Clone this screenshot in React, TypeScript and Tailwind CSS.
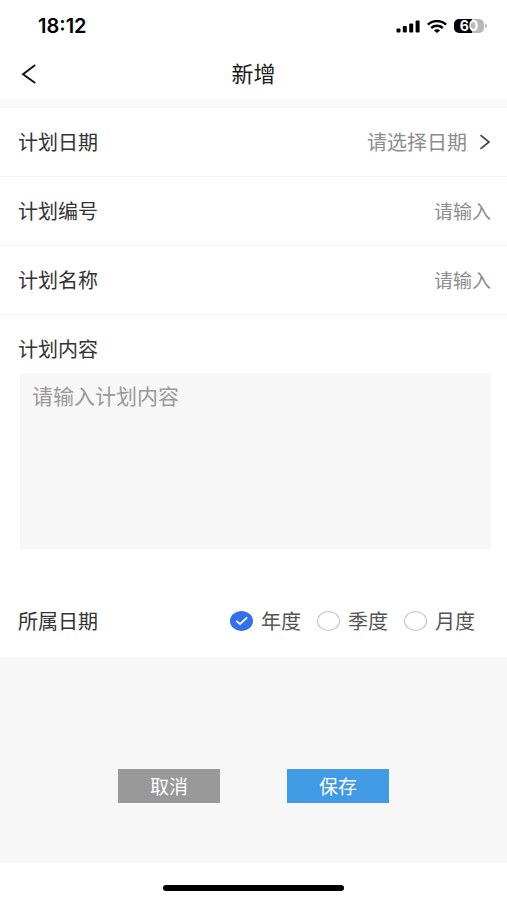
import { useState } from 'react';

interface TextRowProps {
  id: string;
  label: string;
}

const periods = [
  { value: 'year', label: '年度' },
  { value: 'quarter', label: '季度' },
  { value: 'month', label: '月度' },
];

function StatusBar() {
  return (
    <div className="flex h-12 items-center justify-between pt-1 pr-5 pl-[38px]">
      <span className="font-['Inter'] text-[20px] leading-6 font-semibold text-black">18:12</span>
      <div className="flex items-center gap-[7px]">
        <svg className="h-[13px] w-6" viewBox="0 0 24 13" fill="#000">
          <rect x="0.5" y="8.5" width="4" height="4" rx="1" />
          <rect x="6.8" y="6" width="4" height="6.5" rx="1" />
          <rect x="13.2" y="3.4" width="4" height="9.1" rx="1" />
          <rect x="19.6" y="0.5" width="4" height="12" rx="1" />
        </svg>
        <svg className="h-[13px] w-5" viewBox="0 0 20 13" fill="none" stroke="#000" strokeWidth="2.5">
          <path d="M0.9 4.6C6 -0.1 14 -0.1 19.1 4.6" />
          <path d="M4.2 8c3.3-2.9 8.3-2.9 11.6 0" />
          <path d="M10 13 6.900 10.400c1.800-1.500 4.400-1.500 6.200 0z" fill="#000" stroke="none" />
        </svg>
        <div className="flex items-center gap-px">
          <div className="flex h-[14px] w-[30px] items-center justify-center rounded-[5px] bg-linear-to-r from-black from-60% to-[#b9b9b9] to-60% font-['Inter'] text-[14px] leading-[14px] font-bold text-white">
            60
          </div>
          <div className="h-1 w-[2px] rounded-r-full bg-[#b9b9b9]" />
        </div>
      </div>
    </div>
  );
}

function TextRow({ id, label }: TextRowProps) {
  return (
    <div className="flex h-[69px] items-center border-b border-[#f4f4f4] pr-4 pl-[18px]">
      <label htmlFor={id} className="shrink-0 text-[20px] leading-7 text-[#333]">
        {label}
      </label>
      <input
        id={id}
        type="text"
        placeholder="请输入"
        className="h-7 min-w-0 flex-1 text-right text-[19px] leading-7 text-[#333] outline-none placeholder:text-[#8c8c8c]"
      />
    </div>
  );
}

export default function App() {
  const [period, setPeriod] = useState('year');

  return (
    <div className="flex min-h-screen flex-col bg-white font-['Noto_Sans_CJK_SC',sans-serif]">
      <StatusBar />

      <header className="grid h-[51px] grid-cols-[48px_1fr_48px] items-center">
        <button type="button" aria-label="返回" className="flex h-10 items-center pl-[21px]">
          <svg className="h-5 w-4" viewBox="0 0 16 20" fill="none" stroke="#111" strokeWidth="1.9">
            <path d="M14.2 1 2 10.2 14.2 19" />
          </svg>
        </button>
        <h1 className="pb-1 text-center text-[22px] leading-8 text-[#1a1a1a]">新增</h1>
      </header>

      <div className="h-[9px] bg-[#fafafa]" />

      <form className="flex flex-1 flex-col" onSubmit={(e) => e.preventDefault()}>
        <div className="flex h-[69px] items-center justify-between border-b border-[#f4f4f4] pr-4 pl-[18px]">
          <label htmlFor="plan-date" className="text-[20px] leading-7 text-[#333]">
            计划日期
          </label>
          <button id="plan-date" type="button" className="flex items-center gap-3 text-[20px] leading-7 text-[#8c8c8c]">
            请选择日期
            <svg className="h-4 w-3" viewBox="0 0 12 16" fill="none" stroke="#444" strokeWidth="1.7">
              <path d="M1.5 1.2 10 8l-8.500 6.800" />
            </svg>
          </button>
        </div>

        <TextRow id="plan-code" label="计划编号" />
        <TextRow id="plan-name" label="计划名称" />

        <div className="flex flex-col gap-[10px] pt-5 pr-4 pb-9 pl-[18px]">
          <label htmlFor="plan-content" className="text-[20px] leading-7 text-[#333]">
            计划内容
          </label>
          <textarea
            id="plan-content"
            placeholder="请输入计划内容"
            className="ml-[2px] block h-44 resize-none bg-[#f7f7f7] px-3 py-2 text-[21px] leading-7 text-[#333] outline-none placeholder:text-[#999]"
          />
        </div>

        <div
          role="radiogroup"
          aria-labelledby="period-label"
          className="flex h-[72px] items-center justify-between pr-8 pl-[18px]"
        >
          <span id="period-label" className="text-[20px] leading-7 text-[#333]">
            所属日期
          </span>
          <div className="flex gap-4">
            {periods.map((item) => (
              <label key={item.value} className="flex items-center gap-2 text-[20px] leading-7 text-[#555]">
                <span className="relative flex">
                  <input
                    type="radio"
                    name="period"
                    value={item.value}
                    checked={period === item.value}
                    onChange={() => setPeriod(item.value)}
                    className="h-5 w-[23px] appearance-none rounded-[50%] border border-[#c4c4c4] bg-white checked:border-[#3370eb] checked:bg-[#3370eb]"
                  />
                  {period === item.value && (
                    <svg
                      className="pointer-events-none absolute inset-0 h-5 w-[23px]"
                      viewBox="0 0 23 20"
                      fill="none"
                      stroke="#fff"
                      strokeWidth="1.7"
                    >
                      <path d="M6.300 9.800 10 13l7.200-6.600" />
                    </svg>
                  )}
                </span>
                {item.label}
              </label>
            ))}
          </div>
        </div>

        <div className="flex flex-1 items-start justify-center gap-[67px] bg-[#f7f7f7] pt-28 pb-[60px]">
          <button type="button" className="h-[34px] w-[102px] bg-[#999] text-[19px] leading-7 text-white">
            取消
          </button>
          <button type="submit" className="h-[34px] w-[102px] bg-[#409ae4] text-[19px] leading-7 text-white">
            保存
          </button>
        </div>
      </form>

      <div className="flex h-[37px] items-end justify-center pb-[9px]">
        <div className="h-[6px] w-[181px] rounded-full bg-black" />
      </div>
    </div>
  );
}
